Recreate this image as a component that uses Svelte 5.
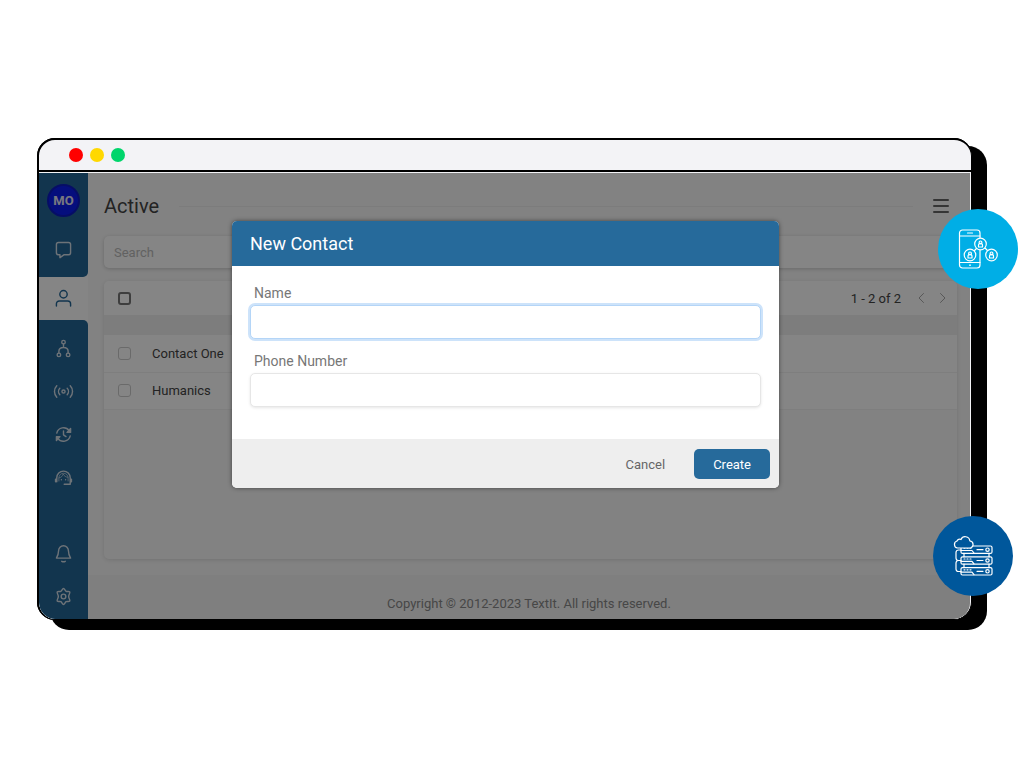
<script>
  const contacts = ['Contact One', 'Humanics'];
  let query = $state('');
  let name = $state('');
  let phone = $state('');
</script>

{#snippet person(x, y)}
  <circle cx={x} cy={y} r="5.8" fill="#00aee6" />
  <circle cx={x} cy={y - 1.6} r="1.4" />
  <path d="M{x - 2} {y + 3}v-1.7a2 2 0 0 1 4 0v1.7z" />
{/snippet}

{#snippet drive(y)}
  <rect x="8" y={y} width="31" height="7.4" rx="1.5" />
  <path d="M8 {y + 4.5}h11l2 2.5M11 {y + 2.2}h1M14 {y + 2.2}h1M17 {y + 2.2}h1M24 {y + 3.7}h6" />
  <circle cx="34.5" cy={y + 3.7} r="1.7" />
{/snippet}

<main class="stage">
  <div class="window">
    <div class="frame">
      <div class="titlebar">
        <span class="dot red"></span>
        <span class="dot yellow"></span>
        <span class="dot green"></span>
      </div>

      <div class="screen">
        <nav class="sidebar" aria-label="Main">
          <div class="block top">
            <a class="avatar" href="#account">MO</a>
            <a class="item messages" href="#messages" aria-label="Messages">
              <svg viewBox="0 0 24 24"><path d="M5 2h14a3 3 0 0 1 3 3v11.500a3 3 0 0 1-3 3h-6.500L7 23.500v-4H5a3 3 0 0 1-3-3V5a3 3 0 0 1 3-3z" /></svg>
            </a>
          </div>
          <a class="item active" href="#contacts" aria-label="Contacts">
            <svg viewBox="0 0 24 24"><circle cx="12" cy="6" r="5.200" /><path d="M2 22.500v-3a4 4 0 0 1 4-4h12a4 4 0 0 1 4 4v3" /></svg>
          </a>
          <div class="block rest">
            <a class="item" href="#flows" aria-label="Flows">
              <svg viewBox="0 0 24 24"><circle cx="12" cy="3" r="2.500" /><circle cx="5.500" cy="21" r="2.500" /><circle cx="18.500" cy="21" r="2.500" /><path d="M12 5.500v5M5.500 18.500V16c0-3.500 3-5.500 6.500-5.500s6.500 2 6.500 5.500v2.500" /></svg>
            </a>
            <a class="item" href="#triggers" aria-label="Triggers">
              <svg viewBox="0 0 24 24"><circle cx="12" cy="12" r="2.200" /><path d="M6.800 7.500a6.500 6.500 0 0 0 0 9M17.200 7.500a6.500 6.500 0 0 1 0 9M2.500 4a11.500 11.500 0 0 0 0 16M21.500 4a11.500 11.500 0 0 1 0 16" /></svg>
            </a>
            <a class="item" href="#campaigns" aria-label="Campaigns">
              <svg viewBox="0 0 24 24"><path d="M2.500 10A9.800 9.800 0 0 1 20 6.500M21.500 14A9.800 9.800 0 0 1 4 17.500M12 7v5.500l3.500 2.500" /><path fill="currentColor" d="M22 3.500v5.500h-5zM2 20.500V15h5z" /></svg>
            </a>
            <a class="item" href="#tickets" aria-label="Tickets">
              <svg viewBox="0 0 24 24"><path d="M2.500 18v-5.500a9.500 9.500 0 0 1 19 0V21.500H13M.8 14.500v3.500M23.200 14.500v3.500" /><path class="fine" d="M5.800 12.500c3-.5 5-2.500 5.700-5.500 1.500 3 3.700 4.500 6.700 4.700M5.500 17v-4.500a6.500 6.500 0 0 1 13 0V17" /><path d="M9 15v.2M15 15v.2" /></svg>
            </a>
            <a class="item bell" href="#notifications" aria-label="Notifications">
              <svg viewBox="0 0 24 24"><path d="M5 8.500a7 7.500 0 0 1 14 0c0 4 .8 6.500 3 10H2c2.200-3.500 3-6 3-10zM9.500 23c1.500.8 3.500.8 5 0" /></svg>
            </a>
            <a class="item" href="#settings" aria-label="Settings">
              <svg viewBox="0 0 24 24"><circle cx="12" cy="12" r="3.300" /><path d="M12 .8c1.600 0 2.100 2.900 3.700 3.800 1.600.9 4.200-.4 5.100 1 .9 1.600-1.500 3.400-1.500 6.400s2.400 4.800 1.500 6.400c-.9 1.400-3.500.1-5.100 1-1.600.9-2.100 3.800-3.700 3.800s-2.100-2.900-3.700-3.800c-1.600-.9-4.200.4-5.100-1C2.300 16.800 4.700 15 4.700 12S2.300 7.200 3.200 5.600c.9-1.400 3.500-.1 5.100-1C9.900 3.700 10.400.8 12 .8z" /></svg>
            </a>
          </div>
        </nav>

        <section class="content">
          <div class="body">
            <header class="heading">
              <h1>Active</h1>
              <span class="rule"></span>
              <button class="menu" aria-label="Menu"><i></i><i></i><i></i></button>
            </header>
            <input class="search" type="search" placeholder="Search" aria-label="Search" bind:value={query} />
            <div class="card">
              <div class="toolbar">
                <input class="tick strong" type="checkbox" aria-label="Select all" />
                <span class="count">1 - 2 of 2</span>
                <button class="page" aria-label="Previous page"><svg viewBox="0 0 8 12"><path d="M6.500 1.500 2 6l4.500 4.500" /></svg></button>
                <button class="page" aria-label="Next page"><svg viewBox="0 0 8 12"><path d="M1.500 1.500 6 6l-4.500 4.500" /></svg></button>
              </div>
              <table>
                <thead><tr><th class="pick" aria-label="Select"></th><th aria-label="Name"></th></tr></thead>
                <tbody>
                  {#each contacts as contact}
                    <tr>
                      <td class="pick"><input class="tick" type="checkbox" aria-label={contact} /></td>
                      <td>{contact}</td>
                    </tr>
                  {/each}
                </tbody>
              </table>
            </div>
          </div>
          <footer class="copyright">Copyright © 2012-2023 TextIt. All rights reserved.</footer>
        </section>

        <div class="backdrop">
          <form class="dialog" role="dialog" aria-labelledby="dialog-title" onsubmit={(e) => e.preventDefault()}>
            <h2 id="dialog-title">New Contact</h2>
            <div class="fields">
              <label for="name">Name</label>
              <input id="name" class="focused" type="text" bind:value={name} />
              <label for="phone">Phone Number</label>
              <input id="phone" type="tel" bind:value={phone} />
            </div>
            <div class="actions">
              <button type="button" class="cancel">Cancel</button>
              <button type="submit" class="create">Create</button>
            </div>
          </form>
        </div>
      </div>
    </div>

    <div class="badge sky">
      <svg viewBox="0 0 40 40">
        <rect x="1.500" y="1" width="20.500" height="38" rx="3" />
        <path d="M1.500 7H22M1.500 33.500H22M9.500 4h5M11.500 36.200h1M16 22l3-3M27 19l4 4" />
        {@render person(12, 26)}
        {@render person(22.5, 15)}
        {@render person(33.5, 26)}
      </svg>
    </div>
    <div class="badge navy">
      <svg viewBox="0 0 40 40">
        {@render drive(10)}
        {@render drive(20.8)}
        {@render drive(31.6)}
        <path d="M11 17.400v3.400M36 17.400v3.400M11 28.200v3.400M36 28.200v3.400M8 14H5.500A2.500 2.500 0 0 0 3 16.500v5.500A2.500 2.500 0 0 0 5.500 24.500H8M5.500 24.500A2.500 2.500 0 0 0 3 27v6A2.500 2.500 0 0 0 5.500 35.500H8" />
        <path fill="#00579b" d="M4.500 12a3.600 3.600 0 0 1-.5-7 2.800 2.800 0 0 1 4-1.500 4.600 4.600 0 0 1 8.800 1.300A3.700 3.700 0 0 1 17.500 12z" />
      </svg>
    </div>
  </div>
</main>

<style>
  :global(body) {
    margin: 0;
    background: #fff;
  }
  .stage {
    padding: 138px 52px 139px 37px;
    overflow: hidden;
    font-family: Roboto, "Liberation Sans", sans-serif;
    font-size: 13px;
    color: #555;
  }
  .stage *,
  .stage {
    box-sizing: border-box;
  }
  .window {
    position: relative;
    border-radius: 18px;
    background: #000;
    box-shadow: 14px 9px 0 1px #000;
  }
  .frame {
    overflow: hidden;
    border: 2px solid #000;
    border-width: 2px 1px 1px 2px;
    border-radius: 18px;
    background: #f3f3f6;
  }
  .titlebar {
    display: flex;
    align-items: center;
    gap: 7px;
    height: 32px;
    padding-left: 30px;
    border-bottom: 2px solid #000;
  }
  .dot {
    width: 14px;
    height: 14px;
    border-radius: 50%;
  }
  .red { background: #f00; }
  .yellow { background: #ffd800; }
  .green { background: #00d56b; }

  .screen {
    position: relative;
    display: flex;
    overflow: hidden;
    margin: 1px 1px 0 0;
    border-radius: 0 0 16px 16px;
    background: #fafafa;
  }
  .sidebar {
    display: flex;
    flex-direction: column;
    width: 49px;
    flex: none;
    background: #fff;
  }
  .block {
    display: flex;
    flex-direction: column;
    align-items: center;
    background: #236696;
  }
  .top {
    height: 104px;
    padding-top: 11px;
    gap: 11px;
    border-bottom-right-radius: 5px;
  }
  .rest {
    flex: 1;
    padding: 7px 0 1px;
    border-top-right-radius: 5px;
  }
  .avatar {
    display: grid;
    place-items: center;
    width: 33px;
    height: 33px;
    border: 2px solid #0c1ac4;
    border-radius: 50%;
    background: #0a1cf0;
    color: #e6e6f5;
    font-weight: 700;
    text-decoration: none;
  }
  .item {
    display: grid;
    place-items: center;
    width: 100%;
    height: 43px;
    flex: none;
    color: #d2dce6;
  }
  .item svg {
    width: 17px;
    height: 17px;
  }
  svg {
    display: block;
    overflow: visible;
    fill: none;
    stroke: currentColor;
    stroke-width: 2;
    stroke-linecap: round;
    stroke-linejoin: round;
  }
  .fine {
    stroke-width: 1;
  }
  .item.active {
    color: #236696;
  }
  .bell {
    margin-top: auto;
  }

  .content {
    display: flex;
    flex-direction: column;
    flex: 1;
    min-width: 0;
  }
  .body {
    padding: 20px 13px 16px 16px;
  }
  .heading {
    display: flex;
    align-items: center;
    height: 26px;
  }
  h1 {
    margin: 0;
    font-size: 20px;
    font-weight: 400;
    color: #444;
  }
  .rule {
    flex: 1;
    height: 1px;
    margin: 0 20px;
    background: #eee;
  }
  .menu {
    display: flex;
    flex-direction: column;
    gap: 4px;
    width: 16px;
    margin-right: 8px;
    padding: 0;
    border: 0;
    background: none;
  }
  .menu i {
    height: 2px;
    border-radius: 1px;
    background: #666;
  }
  .search {
    display: block;
    width: 100%;
    height: 32px;
    margin: 17px 0 13px;
    padding: 0 10px;
    border: 0;
    border-radius: 5px;
    background: #fff;
    box-shadow: 0 1px 4px rgba(0, 0, 0, 0.2);
    font: inherit;
  }
  .search::placeholder {
    color: #bbb;
    opacity: 1;
  }
  .card {
    min-height: 278px;
    overflow: hidden;
    border-radius: 5px;
    background: #fafafa;
    box-shadow: 0 1px 5px rgba(0, 0, 0, 0.13);
  }
  .toolbar {
    display: flex;
    align-items: center;
    height: 34px;
    padding: 0 10px 0 14px;
    background: #fff;
  }
  .count {
    margin-left: auto;
    margin-right: 16px;
    color: #444;
  }
  .page {
    width: 8px;
    padding: 0;
    border: 0;
    background: none;
    color: #aaa;
  }
  .page + .page {
    margin-left: 14px;
  }
  .page svg {
    width: 8px;
    height: 12px;
    stroke-width: 1;
  }
  .tick {
    display: block;
    appearance: none;
    width: 13px;
    height: 13px;
    margin: 0;
    border: 1px solid #ccc;
    border-radius: 3px;
  }
  .strong {
    border: 2px solid #777;
  }
  table {
    width: 100%;
    border-collapse: collapse;
    background: #fff;
    color: #444;
  }
  th {
    height: 20px;
    padding: 0;
    background: #efefef;
  }
  td {
    height: 37px;
    padding: 0;
    border-bottom: 1px solid #f2f2f2;
  }
  .pick {
    width: 48px;
    padding-left: 14px;
  }
  .copyright {
    flex: 1;
    padding: 21px 0 7px;
    background: #f4f4f4;
    text-align: center;
    line-height: 16px;
    color: #888;
  }

  .backdrop {
    position: absolute;
    inset: 0;
    display: flex;
    justify-content: center;
    align-items: flex-start;
    padding: 48px 34px 32px;
    background: rgba(0, 0, 0, 0.48);
  }
  .dialog {
    width: 100%;
    max-width: 547px;
    overflow: hidden;
    border-radius: 5px;
    background: #fff;
    box-shadow: 0 0 4px rgba(0, 0, 0, 0.5);
  }
  .backdrop {
    padding-left: 36px;
  }
  h2 {
    margin: 0;
    padding: 0 18px;
    background: #266a9b;
    color: #fff;
    font-size: 18px;
    font-weight: 400;
    line-height: 45px;
  }
  .fields {
    padding: 17px 18px 32px;
  }
  .fields label {
    display: block;
    padding-left: 4px;
    font-size: 14px;
    line-height: 20px;
    color: #777;
  }
  .fields input {
    display: block;
    width: 100%;
    height: 34px;
    margin: 2px 0 12px;
    padding: 0 10px;
    border: 1px solid #e6e6e6;
    border-radius: 5px;
    outline: 0;
    background: #fff;
    box-shadow: 0 1px 3px rgba(0, 0, 0, 0.1);
    font: inherit;
  }
  .fields input:last-child {
    margin-bottom: 0;
  }
  .fields input.focused {
    border-color: #b4d5f7;
    box-shadow: 0 0 0 2px #cde3fa;
  }
  .actions {
    display: flex;
    justify-content: flex-end;
    gap: 10px;
    padding: 10px 9px 9px;
    background: #eee;
  }
  .actions button {
    height: 30px;
    padding: 0 19px;
    border: 0;
    border-radius: 5px;
    background: none;
    font: inherit;
    color: #666;
  }
  .actions .create {
    background: #266a9b;
    color: #fff;
  }

  .badge {
    position: absolute;
    display: grid;
    place-items: center;
    width: 80px;
    height: 80px;
    border-radius: 50%;
    color: #fff;
  }
  .badge svg {
    width: 40px;
    height: 40px;
    stroke-width: 1.2;
  }
  .sky {
    top: 71px;
    right: -46px;
    background: #00aee6;
  }
  .navy {
    top: 378px;
    right: -41px;
    background: #00579b;
  }
</style>
